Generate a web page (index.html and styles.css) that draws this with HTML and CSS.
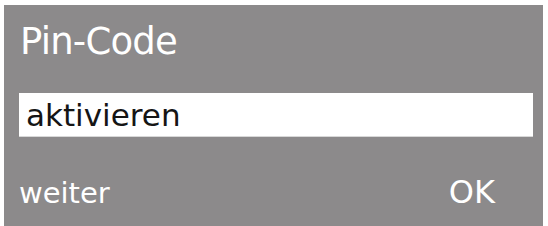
FILE: index.html
```html
<!DOCTYPE html>
<html>
	<head>
		<meta charset="UTF-8">
		<title>Pin-Code</title>
		<link rel="stylesheet" href="styles.css">
	</head>
	<body>
		<div class="panel">
			<div class="tit">Pin-Code</div>
			<div class="field">aktivieren</div>
			<div class="foot">
				<span class="next">weiter</span>
				<span class="ok">OK</span>
			</div>
		</div>
	</body>
</html>
```

FILE: styles.css
```css
*{
	margin: 0;
	padding: 0;
	box-sizing: border-box;
}
body{
	background: #fff;
	font-family: "DejaVu Sans", sans-serif;
	width: 548px;
	height: 226px;
	overflow: hidden;
}
.panel{
	width: 539px;
	height: 221px;
	margin: 5px 0 0 4px;
	padding: 17px 10px 0 15px;
	background: #8c8a8b;
	color: #fff;
}
.tit{
	font-size: 37px;
	line-height: 40px;
	letter-spacing: -0.8px;
	padding-left: 1px;
}
.field{
	height: 44px;
	margin-top: 31px;
	padding: 2px 0 0 7px;
	background: #fff;
	border-bottom: 1px solid #d8d8d8;
	color: #151515;
	font-size: 31px;
	line-height: 41px;
}
.foot{
	display: flex;
	justify-content: space-between;
	align-items: baseline;
	margin-top: 35px;
	padding-right: 38px;
	line-height: 40px;
}
.next{
	font-size: 29px;
}
.ok{
	font-size: 32px;
}
```
